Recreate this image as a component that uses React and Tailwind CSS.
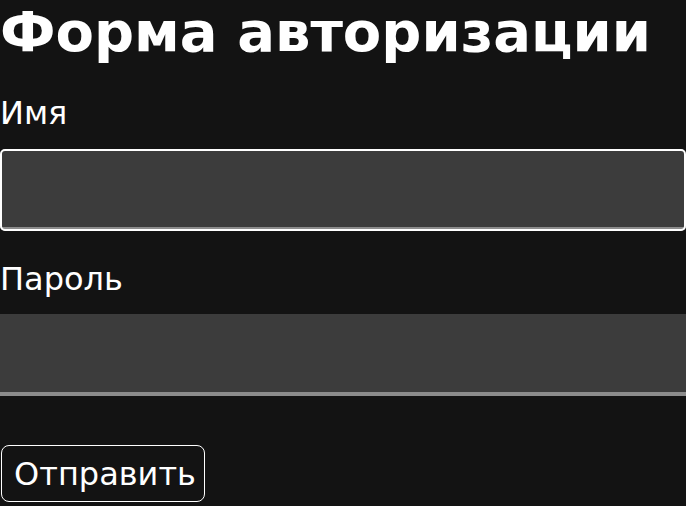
export default function App() {
  return (
    <div className="min-h-screen bg-[#131313] text-white font-['DejaVu_Sans',sans-serif]">
      <form className="flex flex-col items-start">
        <h1 className="text-[56px] leading-[63px] font-bold m-0 whitespace-nowrap">Форма авторизации</h1>

        <label className="mt-[31px] text-[32px] leading-[38px]">Имя</label>
        <input
          type="text"
          className="mt-[17px] w-full h-[82px] bg-[#3c3c3c] border-b-4 border-[#8c8c8c] rounded-[5px] outline-[2.5px] outline-white -outline-offset-2 outline-solid"
        />

        <label className="mt-[29px] text-[32px] leading-[38px]">Пароль</label>
        <input
          type="password"
          className="mt-[16px] w-full h-[82px] bg-[#3c3c3c] border-b-4 border-[#8c8c8c]"
        />

        <button
          type="button"
          className="mt-[49px] ml-px w-[204px] h-[57px] pl-[4px] text-center text-[32px] leading-[38px] border-[1.5px] border-white rounded-[8px]"
        >
          Отправить
        </button>
      </form>
    </div>
  );
}
